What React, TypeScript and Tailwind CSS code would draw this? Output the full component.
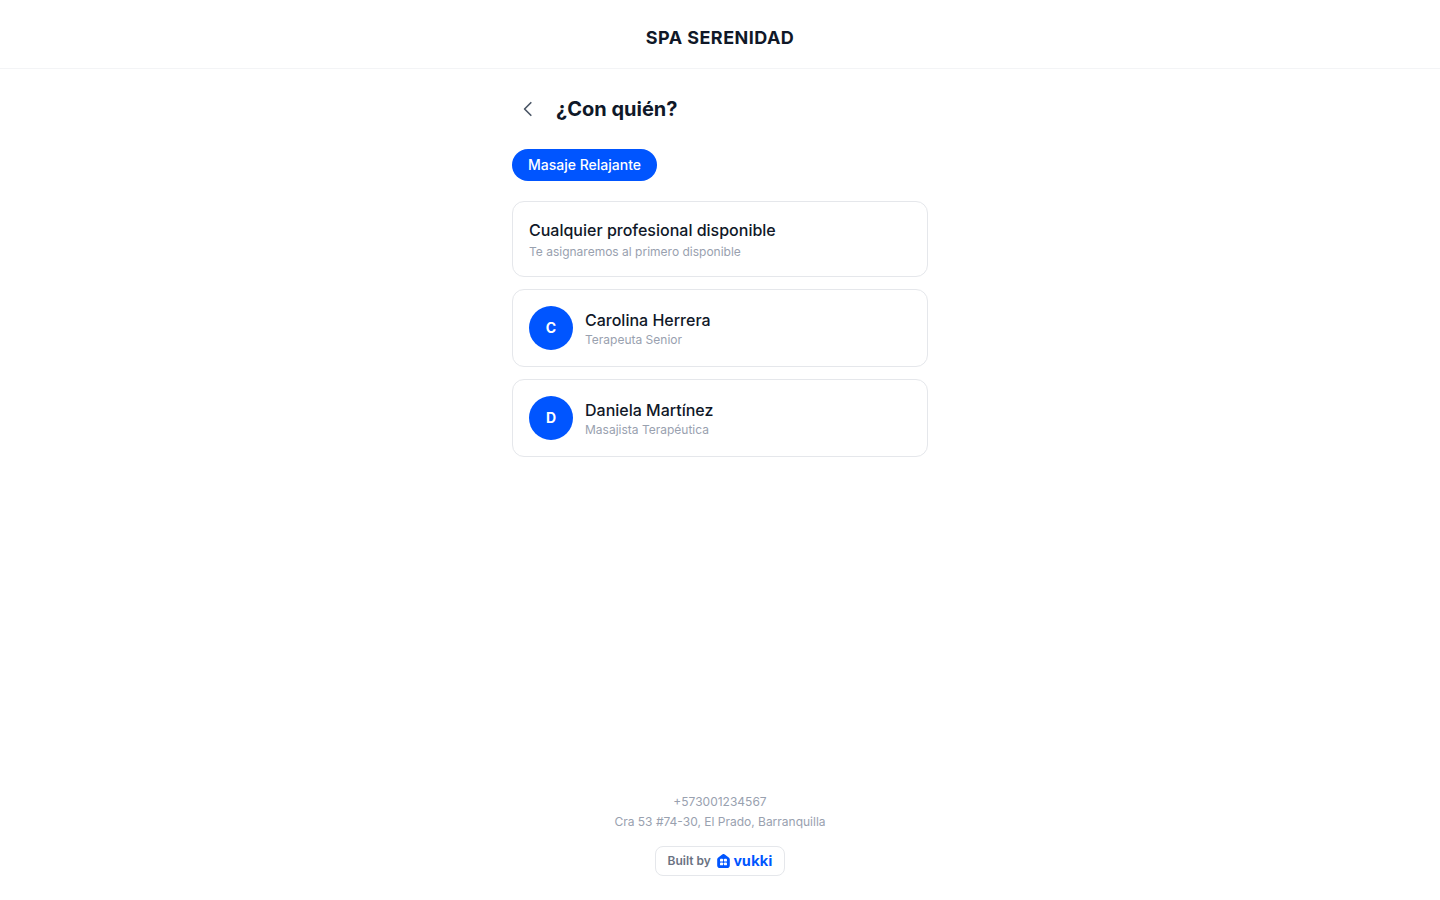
const professionals = [
  { name: 'Carolina Herrera', role: 'Terapeuta Senior' },
  { name: 'Daniela Martínez', role: 'Masajista Terapéutica' },
]

const cardClass =
  'flex w-full cursor-pointer items-center gap-3 rounded-xl border border-gray-200 bg-white p-4 text-left hover:border-[#0055ff]'

function VukkiMark() {
  return (
    <svg width="13" height="14" viewBox="0 0 13 14" aria-hidden="true">
      <path
        fill="#0055ff"
        d="M5.200 .5a2.100 2.100 0 0 1 2.600 0l3.900 3c.8.6 1.100 1.200 1.100 2.100v5.600A2.800 2.800 0 0 1 10 14H3A2.800 2.800 0 0 1 .2 11.200V5.600c0-.9.3-1.500 1.100-2.100z"
      />
      <g fill="#fff">
        <rect x="3" y="4.700" width="3.100" height="2.900" rx="0.900" />
        <rect x="6.900" y="4.700" width="3.100" height="2.900" rx="0.900" />
        <rect x="3" y="8.400" width="3.100" height="2.900" rx="0.900" />
        <rect x="6.900" y="8.400" width="3.100" height="2.900" rx="0.900" />
      </g>
    </svg>
  )
}

export default function App() {
  return (
    <div className="flex min-h-screen flex-col bg-white font-['Inter',sans-serif] text-gray-900">
      <header className="border-b border-gray-100 px-4 pt-6 pb-4">
        <p className="text-center text-lg font-bold tracking-wide">SPA SERENIDAD</p>
      </header>

      <main className="mx-auto w-full max-w-md flex-1 px-4 py-6">
        <div className="mb-6 flex items-center gap-3">
          <button
            type="button"
            aria-label="Volver"
            className="flex size-8 cursor-pointer items-center justify-center rounded-full text-gray-600 hover:bg-gray-100"
          >
            <svg
              width="20"
              height="20"
              viewBox="0 0 24 24"
              fill="none"
              stroke="currentColor"
              strokeWidth="2"
              strokeLinecap="round"
              strokeLinejoin="round"
              aria-hidden="true"
            >
              <path d="M15.400 19.500 7.900 12l7.500-7.500" />
            </svg>
          </button>
          <h1 className="text-xl font-bold">¿Con quién?</h1>
        </div>

        <div className="mb-5 flex">
          <span className="rounded-full bg-[#0055ff] px-4 py-1.5 text-sm font-medium text-white">
            Masaje Relajante
          </span>
        </div>

        <div className="flex flex-col gap-3">
          <button type="button" className={cardClass}>
            <span className="flex flex-col gap-0.5">
              <span className="text-base font-medium">Cualquier profesional disponible</span>
              <span className="text-xs text-gray-400">Te asignaremos al primero disponible</span>
            </span>
          </button>
          {professionals.map((person) => (
            <button type="button" key={person.name} className={cardClass}>
              <span
                aria-hidden="true"
                className="flex size-11 shrink-0 items-center justify-center rounded-full bg-[#0055ff] text-sm font-bold text-white"
              >
                {person.name[0]}
              </span>
              <span className="flex flex-col">
                <span className="text-base font-medium">{person.name}</span>
                <span className="text-xs text-gray-400">{person.role}</span>
              </span>
            </button>
          ))}
        </div>
      </main>

      <footer className="flex flex-col items-center px-4 py-6">
        <div className="mb-4 flex flex-col items-center gap-1 text-xs text-gray-400">
          <a href="tel:+573001234567">+573001234567</a>
          <p>Cra 53 #74-30, El Prado, Barranquilla</p>
        </div>
        <a
          href="#vukki"
          className="flex items-center gap-1.5 rounded-lg border border-gray-200 bg-white px-3 py-1.5 text-xs font-semibold text-gray-500"
        >
          Built by
          <span className="flex items-center gap-1">
            <VukkiMark />
            <span className="font-['Noto_Sans',sans-serif] text-sm leading-4 font-bold text-[#0055ff]">
              vukki
            </span>
          </span>
        </a>
      </footer>
    </div>
  )
}
